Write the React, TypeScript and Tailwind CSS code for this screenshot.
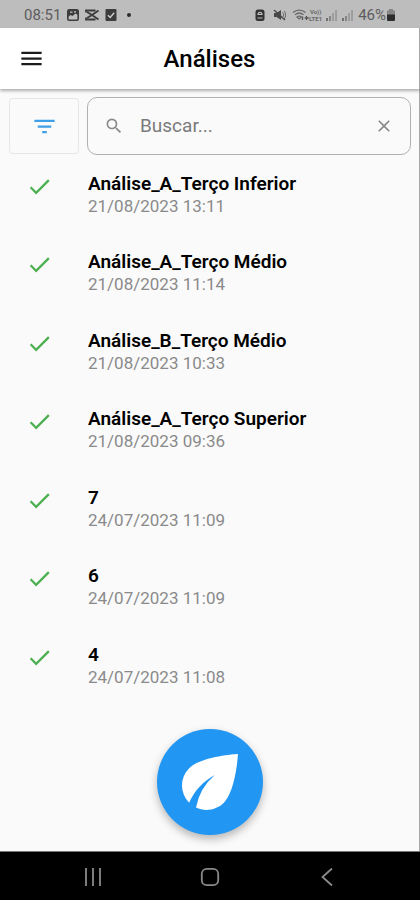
import React from 'react';
import { MdCheck, MdClose, MdEco, MdFilterList, MdMenu, MdSearch } from 'react-icons/md';

interface Analysis {
  id: number;
  title: string;
  date: string;
}

const analyses: Analysis[] = [
  { id: 1, title: 'Análise_A_Terço Inferior', date: '21/08/2023 13:11' },
  { id: 2, title: 'Análise_A_Terço Médio', date: '21/08/2023 11:14' },
  { id: 3, title: 'Análise_B_Terço Médio', date: '21/08/2023 10:33' },
  { id: 4, title: 'Análise_A_Terço Superior', date: '21/08/2023 09:36' },
  { id: 5, title: '7', date: '24/07/2023 11:09' },
  { id: 6, title: '6', date: '24/07/2023 11:09' },
  { id: 7, title: '4', date: '24/07/2023 11:08' },
];

const SignalIcon: React.FC = () => (
  <svg viewBox="0 0 12 12" className="h-3 w-3">
    <path d="M0 9h2v3H0z" fill="#6f6f6f" />
    <path d="M3 7h2v5H3z" fill="#858585" />
    <path d="M6 4h2v8H6zM9 1h2v11H9z" fill="#9d9d9d" />
  </svg>
);

const StatusBar: React.FC = () => (
  <div className="flex h-7 items-center justify-between bg-[#bdbdbd] pt-0.5 pr-6 pl-6 text-[#5c5c5c]">
    <div className="flex items-center gap-1.5">
      <span className="text-[15px] leading-5">08:51</span>
      {/* Gallery */}
      <svg viewBox="0 0 12 12" className="h-3 w-3" fill="none" stroke="#3c3c3c">
        <rect x="0.8" y="0.8" width="10.4" height="10.4" rx="1.5" strokeWidth="1.6" />
        <path d="M1 1h10v5L8.500 4.500 5.500 7 3.500 6 1 8z" fill="#3c3c3c" stroke="none" />
        <path d="M3 3.200h2.500M7 2.800h2" stroke="#bdbdbd" strokeWidth="1.200" />
      </svg>
      {/* Video editor */}
      <svg viewBox="0 0 14 12" className="h-3 w-3.5" fill="none" stroke="#3c3c3c" strokeWidth="1.8">
        <path d="M13.500 1.500 7 6 2 9M13.500 10.500 7 6 2 3" />
        <path d="M1 3.500V1.500h9.500M1 8.500v2h9.500" />
      </svg>
      {/* Task done */}
      <svg viewBox="0 0 12 12" className="h-3 w-3">
        <rect x="0.5" width="11" height="12" rx="1" fill="#3c3c3c" />
        <path d="M3 6.200 5.200 8.500 9.200 3.800" fill="none" stroke="#d0d0d0" strokeWidth="1.400" />
      </svg>
      <span className="ml-1 h-1 w-1 rounded-full bg-[#2c2c2c]" />
    </div>

    <div className="flex items-center gap-1">
      {/* Battery saver */}
      <svg viewBox="0 0 10 12" className="mr-1 h-3 w-2.5">
        <rect x="0.5" y="0.5" width="9" height="11.500" rx="2.500" fill="#333" />
        <path d="M3 5.500a2 2.200 0 0 1 4 0zM2.500 9h5" fill="none" stroke="#bdbdbd" strokeWidth="1.200" />
      </svg>
      {/* Muted */}
      <svg viewBox="0 0 13 12" className="mr-0.5 h-3 w-[13px]">
        <path d="M1 4h2.500L8 1v10L3.500 8H1z" fill="#484848" />
        <path d="M9.500 3.500c1.500 1.500 1.500 3.500 0 5M11 2c2.200 2.500 2.200 5.500 0 8" fill="none" stroke="#666" />
        <path d="m1 1 11 10" stroke="#484848" strokeWidth="1.400" />
      </svg>
      {/* Wi-Fi */}
      <svg viewBox="0 0 17 12" className="h-3 w-[17px]" fill="none" stroke="#6a6a6a" strokeWidth="1.300">
        <path d="M1 3.500c3.500-3.300 9-3.300 12.500 0M3 5.800c2.600-2.200 6-2.200 8.500 0M5 8c1.500-1.200 3-1.200 4.500 0L7.200 10z" />
        <path d="M10.500 7.500V11M14.500 7v4M12.700 9h4" stroke="#555" />
      </svg>
      <span className="-ml-1 flex flex-col text-center text-[6px] leading-[7px] font-bold text-[#686868]">
        <span>Vo))</span>
        <span>LTE1</span>
      </span>
      <SignalIcon />
      <SignalIcon />
      <div className="flex items-center">
        <span className="text-[15px] leading-5">46%</span>
        <svg viewBox="0 0 10 12" className="h-3 w-2.5">
          <path d="M3 0h4v1.500h2V6H1V1.500h2z" fill="#858585" />
          <path d="M1 5.500h8V11a1 1 0 0 1-1 1H2a1 1 0 0 1-1-1z" fill="#2c2c2c" />
        </svg>
      </div>
    </div>
  </div>
);

const NavigationBar: React.FC = () => (
  <nav className="flex h-[49px] items-center justify-around border-t border-[#777] bg-black px-[34px] pt-0.5 text-[#8a8a8a]">
    <button aria-label="Recentes" className="p-1">
      <svg viewBox="0 0 20 20" className="h-5 w-5" fill="none" stroke="currentColor" strokeWidth="1.800">
        <path d="M3 1v18M10 1v18M17 1v18" />
      </svg>
    </button>
    <button aria-label="Início" className="p-1">
      <svg viewBox="0 0 20 20" className="h-5 w-5" fill="none" stroke="currentColor" strokeWidth="1.800">
        <rect x="1.800" y="1.800" width="16.400" height="16.400" rx="5" />
      </svg>
    </button>
    <button aria-label="Voltar" className="p-1">
      <svg viewBox="0 0 20 20" className="h-5 w-5" fill="none" stroke="currentColor" strokeWidth="1.800">
        <path d="M15 1.500 5.500 10 15 18.500" />
      </svg>
    </button>
  </nav>
);

const App: React.FC = () => {
  return (
    <div className="flex min-h-screen flex-col bg-[#fafafa] font-['Roboto',sans-serif]">
      <StatusBar />

      <header className="relative grid h-[61px] grid-cols-[1fr_auto_1fr] items-center border-r border-[#a8a8a8] bg-white px-[18px] shadow-[0_2px_3px_rgba(0,0,0,0.3)]">
        <button aria-label="Menu" className="justify-self-start text-[#1c1c1c]">
          <MdMenu className="h-[27px] w-[27px]" />
        </button>
        <h1 className="text-[24px] leading-7 font-medium text-black">Análises</h1>
      </header>

      <main className="flex flex-1 flex-col border-r border-[#a8a8a8]">
        <div className="flex items-center gap-2 pt-2 pr-2 pl-[9px]">
          <button aria-label="Filtrar" className="flex h-14 w-[70px] items-center justify-center rounded border border-[#e6e6e6] text-[#3d9fe8]">
            <MdFilterList className="h-[27px] w-[27px]" />
          </button>
          <div className="flex h-[58px] flex-1 items-center rounded-[10px] border border-[#b0b0b0] px-4">
            <MdSearch className="h-5 w-5 shrink-0 text-[#8a8a8a]" />
            <input
              type="text"
              aria-label="Buscar"
              placeholder="Buscar..."
              className="ml-4 w-0 flex-1 bg-transparent text-[19px] leading-6 outline-none placeholder:text-[#7a7a7a]"
            />
            <button aria-label="Limpar" className="text-[#8a8a8a]">
              <MdClose className="h-5 w-5" />
            </button>
          </div>
        </div>

        <ul className="mt-1.5 grid flex-1 auto-rows-fr">
          {analyses.map((item) => (
            <li key={item.id} className="flex pt-2.5 pl-[26px]">
              <MdCheck className="mt-0.5 h-[27px] w-[27px] shrink-0 text-[#4caf50]" />
              <div className="ml-[35px]">
                <h2 className="text-[19px] leading-[25px] font-semibold text-black">{item.title}</h2>
                <p className="text-[17px] leading-5 text-[#8a8a8a]">{item.date}</p>
              </div>
            </li>
          ))}
        </ul>

        <div className="flex justify-center pt-[19px] pb-4">
          <button
            aria-label="Nova análise"
            className="flex h-[106px] w-[106px] items-center justify-center rounded-full bg-[#2196f3] text-white shadow-[0_4px_8px_rgba(0,0,0,0.28)]"
          >
            <MdEco className="h-[84px] w-[84px]" />
          </button>
        </div>
      </main>

      <NavigationBar />
    </div>
  );
};

export default App;
